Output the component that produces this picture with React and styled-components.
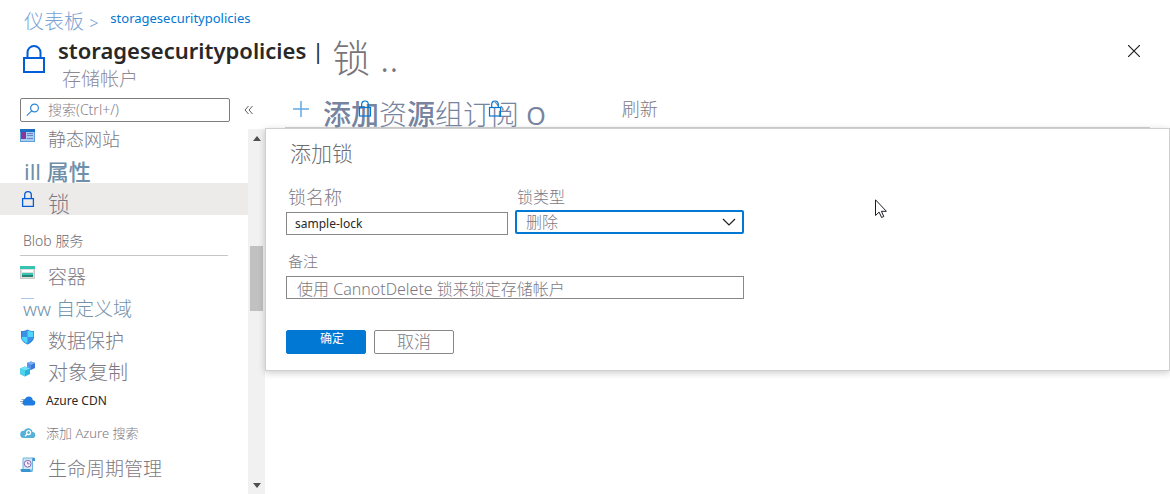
import React from "react";
import styled, { createGlobalStyle } from "styled-components";

const Global = createGlobalStyle`
  *, *::before, *::after { box-sizing: border-box; }
  body { margin: 0; background: #fff; color: #7c7983; }
  body, button, input, select {
    font-family: "Noto Sans", "Noto Sans CJK SC", sans-serif;
    font-weight: 300;
  }
`;

const Page = styled.div`
  min-height: 100vh;
  display: flex;
  flex-direction: column;
  overflow: hidden;
`;

/* ---------- header ---------- */
const Header = styled.header`
  height: 98px;
  display: flex;
  flex-direction: column;
`;
const Crumbs = styled.nav`
  display: flex;
  gap: 12px;
  height: 35px;
  padding: 8px 0 0 24px;
  white-space: nowrap;
`;
const CrumbLink = styled.a`
  color: ${(p) => (p.$strong ? "#0078d4" : "#7ba3d6")};
  font-size: ${(p) => (p.$strong ? 13 : 20)}px;
  font-weight: ${(p) => (p.$strong ? 400 : 300)};
  line-height: ${(p) => (p.$strong ? 20 : 28)}px;
  text-decoration: none;
`;
const CrumbMark = styled.span`
  font-size: 16px;
`;
const TitleBar = styled.div`
  display: flex;
  align-items: flex-start;
  padding: 0 28px 0 22px;
`;
const TitleIcon = styled.svg`
  width: 24px;
  height: 30px;
  margin-top: 9px;
  flex: none;
`;
const TitleText = styled.div`
  flex: 1;
  height: 62px;
  padding-left: 12px;
`;
const TitleLine = styled.h1`
  margin: 0;
  height: 31px;
  display: flex;
  gap: 8px;
  white-space: nowrap;
  color: #292827;
  font-size: 22px;
  font-weight: 600;
  line-height: 30px;
`;
const TitleDivider = styled.span`
  font-weight: 400;
`;
const TitleSuffix = styled.span`
  color: #77757a;
  font-size: 38px;
  font-weight: 300;
  line-height: 44px;
`;
const Subtitle = styled.p`
  margin: 0;
  padding-left: 4px;
  font-size: 19px;
  line-height: 26px;
  color: #8d8a95;
`;
const CloseButton = styled.button`
  width: 16px;
  height: 16px;
  margin-top: 8px;
  padding: 2px;
  border: 0;
  background: none;
  svg { display: block; width: 12px; height: 12px; }
`;

/* ---------- body ---------- */
const Body = styled.div`
  flex: 1;
  display: flex;
`;
const Sidebar = styled.aside`
  width: 265px;
  flex: none;
  display: flex;
  flex-direction: column;
`;
const SearchRow = styled.div`
  display: flex;
  align-items: center;
  gap: 14px;
  height: 24px;
  padding-left: 20px;
`;
const SearchBox = styled.label`
  width: 210px;
  height: 24px;
  display: flex;
  align-items: center;
  gap: 8px;
  padding: 0 5px;
  border: 1px solid #807e7c;
  border-radius: 2px;
  svg { width: 14px; height: 14px; flex: none; }
`;
const SearchInput = styled.input`
  flex: 1;
  min-width: 0;
  padding: 0;
  border: 0;
  outline: 0;
  background: none;
  font-size: 14px;
  line-height: 20px;
  &::placeholder { color: #85828c; opacity: 1; }
`;
const CollapseButton = styled.button`
  padding: 0;
  border: 0;
  background: none;
  width: 10px;
  height: 10px;
  svg { display: block; width: 10px; height: 10px; }
`;
const MenuArea = styled.div`
  flex: 1;
  display: flex;
`;
const Menu = styled.nav`
  flex: 1;
  margin-top: -3px;
`;
const MenuItem = styled.a`
  position: relative;
  height: 32px;
  display: flex;
  align-items: center;
  gap: ${(p) => p.$gap || 12}px;
  padding-left: ${(p) => p.$indent || 20}px;
  background: ${(p) => (p.$selected ? "#edebe9" : "transparent")};
  color: ${(p) => p.$color || "#7c7983"};
  font-size: ${(p) => p.$size || 19}px;
  font-weight: ${(p) => p.$weight || 300};
  line-height: 24px;
  text-decoration: none;
  white-space: nowrap;
  svg { width: 16px; height: 16px; flex: none; }
  b { font-weight: 500; }
`;
const ItemText = styled.span`
  padding-top: ${(p) => (p.$level ? 0 : 8)}px;
`;
const TopMark = styled.i`
  position: absolute;
  top: 9px;
  left: 21px;
  width: 13px;
  height: 1px;
  background: #a9c8e8;
`;
const MenuHeading = styled.h2`
  height: 41px;
  margin: 0 20px 1px;
  padding: 16px 0 0 3px;
  border-bottom: 1px solid #c8c6c4;
  font-size: 14px;
  font-weight: 300;
  line-height: 20px;
  color: #6c6a70;
`;
const ScrollTrack = styled.div`
  width: 17px;
  margin-top: 7px;
  display: flex;
  flex-direction: column;
  align-items: center;
  justify-content: space-between;
  padding: 7px 0 6px;
  background: #f1f1f1;
  svg { width: 8px; height: 5px; }
`;
const ScrollRail = styled.div`
  flex: 1;
  padding-top: 105px;
`;
const ScrollThumb = styled.div`
  width: 13px;
  height: 65px;
  background: #c1c1c1;
`;

/* ---------- main ---------- */
const Main = styled.main`
  flex: 1;
  min-width: 0;
`;
const Toolbar = styled.div`
  position: relative;
  z-index: 1;
  display: flex;
  height: 30px;
  margin: 0 20px;
  padding-left: 8px;
  border-bottom: 1px solid #c8c8c8;
`;
const ToolButton = styled.button`
  position: relative;
  display: flex;
  align-items: flex-start;
  gap: 14px;
  padding: 0;
  border: 0;
  background: none;
  color: #76849f;
  font-size: ${(p) => p.$size}px;
  line-height: ${(p) => p.$line}px;
  white-space: nowrap;
  b { font-weight: 500; }
`;
const PlainGlyph = styled.span`
  font-weight: 400;
  font-size: 25px;
`;
const PlusIcon = styled.svg`
  width: 16px;
  height: 16px;
  margin-top: 3px;
`;
const LockBadge = styled.svg`
  position: absolute;
  top: 2px;
  left: ${(p) => p.$left}px;
  width: 14px;
  height: 17px;
`;
const RefreshButton = styled(ToolButton)`
  margin-left: 76px;
  color: #7c7983;
`;
const Panel = styled.form`
  padding: 11px 20px 16px;
  border: 1px solid #cfcfcf;
  background: #fff;
  box-shadow: 0 2px 7px rgba(0, 0, 0, 0.2);
`;
const PanelTitle = styled.h2`
  margin: 0;
  padding-left: 4px;
  font-size: 21px;
  font-weight: 300;
  line-height: 27px;
  color: #6e6c70;
`;
const Fields = styled.div`
  display: grid;
  grid-template-columns: minmax(0, 222px) minmax(0, 229px);
  gap: 14px 7px;
  padding-top: 18px;
`;
const Field = styled.div`
  display: flex;
  flex-direction: column;
  grid-column: ${(p) => (p.$wide ? "1 / -1" : "auto")};
`;
const FieldLabel = styled.label`
  padding-left: 2px;
  height: ${(p) => p.$height}px;
  font-size: ${(p) => p.$size}px;
  line-height: 24px;
`;
const TextInput = styled.input`
  width: 100%;
  height: 23px;
  padding: 0 ${(p) => (p.$cjk ? 10 : 8)}px;
  border: 1px solid #8a8886;
  border-radius: 0;
  outline: 0;
  color: ${(p) => (p.$cjk ? "#7c7983" : "#292827")};
  font-size: ${(p) => (p.$cjk ? 16 : 12)}px;
  font-weight: ${(p) => (p.$cjk ? 300 : 400)};
`;
const SelectWrap = styled.div`
  position: relative;
  svg {
    position: absolute;
    right: 8px;
    top: 8px;
    width: 14px;
    height: 9px;
    pointer-events: none;
  }
`;
const Select = styled.select`
  display: block;
  width: 100%;
  height: 24px;
  padding: 0 9px;
  border: 2px solid #0078d4;
  border-radius: 2px;
  outline: 0;
  appearance: none;
  background: #fff;
  color: #7c7983;
  font-size: 16px;
  line-height: 18px;
`;
const Actions = styled.div`
  display: flex;
  gap: 8px;
  padding-top: 31px;
`;
const Button = styled.button`
  width: 80px;
  height: 24px;
  padding: ${(p) => (p.$primary ? "0 0 6px 12px" : "0")};
  border: 1px solid ${(p) => (p.$primary ? "#0078d4" : "#8a8886")};
  border-radius: 2px;
  background: ${(p) => (p.$primary ? "#0078d4" : "#fff")};
  color: ${(p) => (p.$primary ? "#fff" : "#7c7983")};
  font-size: ${(p) => (p.$primary ? 12 : 17)}px;
  font-weight: ${(p) => (p.$primary ? 400 : 300)};
  line-height: 16px;
`;
const Pointer = styled.svg`
  position: absolute;
  left: 875px;
  top: 199px;
  width: 12px;
  height: 20px;
  pointer-events: none;
`;

/* ---------- icons ---------- */
const SiteIcon = () => (
  <svg viewBox="0 0 16 16">
    <rect x="0" y="2" width="15" height="13" fill="#5ea0dc" />
    <rect x="0" y="2" width="15" height="3" fill="#1b6fc2" />
    <rect x="1" y="5" width="13" height="9" fill="#a9cdf0" />
    <rect x="1" y="5" width="5" height="7" fill="#86379b" />
    <path d="M7 6.500h6M7 8.500h6M7 11.500h6" stroke="#6f7fc4" />
  </svg>
);
const LockIcon = () => (
  <svg viewBox="0 0 16 16" fill="none" stroke="#015cda" strokeWidth="1.300">
    <rect x="2.600" y="7.600" width="10.800" height="7.800" />
    <path d="M4.700 7.500V4a3.300 3.300 0 0 1 6.600 0v3.500" />
  </svg>
);
const ContainerIcon = () => (
  <svg viewBox="0 0 16 16">
    <rect x="0" y="1" width="15" height="13" rx="1" fill="#c8c8c8" />
    <rect x="0" y="1" width="15" height="3" fill="#37c2b1" />
    <rect x="1" y="4" width="13" height="9" fill="#dedede" />
    <rect x="2" y="5" width="11" height="2" fill="#fff" />
    <rect x="2" y="8" width="11" height="2" fill="#37c2b1" />
    <rect x="2" y="10" width="11" height="2" fill="#258277" />
  </svg>
);
const ShieldIcon = () => (
  <svg viewBox="0 0 16 16">
    <path d="M7.500.5C9 1.800 11.500 2 14 2v6c0 3.500-3.500 6-6.500 7.500C4.500 14 1 11.500 1 8V2c2.500 0 5-.2 6.500-1.500z" fill="#1c7cd6" />
    <path d="M7.500 1.300V8H1.600V2.600C4 2.600 6 2.400 7.500 1.300z" fill="#3c91e4" />
    <path d="M7.500 8h5.900c0 3-3 5.300-5.900 6.800z" fill="#3c91e4" />
    <path d="M7.500 1.300V8h5.900V2.600c-2.400 0-4.400-.2-5.900-1.300z" fill="#50d8fc" />
    <path d="M7.500 8H1.600c0 3 3 5.300 5.900 6.800z" fill="#50d8fc" />
  </svg>
);
const ReplicaIcon = () => (
  <svg viewBox="0 0 16 16">
    <path d="M11 .5 15 2v5l-4 2-4-2V2z" fill="#3b78dc" />
    <path d="M11 .5 15 2l-4 2-4-2z" fill="#7fabf4" />
    <path d="m7 2 4 2v5L7 7z" fill="#5a93ee" />
    <path d="m5 5.500 5 2V13l-5 2.500L0 13V7.500z" fill="#27b4dc" />
    <path d="m5 5.500 5 2-5 2-5-2z" fill="#74e2f6" />
    <path d="m0 7.500 5 2v6L0 13z" fill="#4fd3ec" />
  </svg>
);
const CdnIcon = () => (
  <svg viewBox="0 0 16 16">
    <path d="M1.500 6.500h4M0 8.500h5M1.500 10.500h4" stroke="#9aa7b5" />
    <path d="M12.800 7.300A4.100 4.100 0 0 0 8.700 3.500 4.200 4.200 0 0 0 4.800 6.200 3.300 3.300 0 0 0 2.600 9.400 3.200 3.200 0 0 0 5.900 12.500h6.700a2.600 2.600 0 0 0 .2-5.200z" fill="#1f7ce0" />
  </svg>
);
const SearchCloudIcon = () => (
  <svg viewBox="0 0 16 16">
    <path d="M12.500 7A4.500 4.500 0 0 0 4 5.800 3.600 3.600 0 0 0 3.600 13h8.500A3 3 0 0 0 12.500 7z" fill="#55b1d8" />
    <circle cx="8.600" cy="7.600" r="2" fill="none" stroke="#fff" strokeWidth="1.200" />
    <path d="M7.200 9 5 11.200" stroke="#fff" strokeWidth="1.400" />
  </svg>
);
const LifecycleIcon = () => (
  <svg viewBox="0 0 16 16">
    <path d="M4 .5h9.500c1 0 1.500.6 1.500 1.500v2h-2v9c0 1-.6 2-1.500 2h-9C1.500 15 1 14.200 1 12.500h1.500V2c0-1 .6-1.500 1.500-1.500z" fill="#6fb4dc" />
    <path d="M3.500 1.500H12v11H3.500z" fill="#d3e8f6" />
    <path d="M12.500 4V2.300c0-.8.400-1.500 1-1.500S15 1.500 15 2.500V4zM.5 12h9.500c0 1.700.5 3 1.500 3h-9C1 15 .5 13.700.5 12z" fill="#3a94cd" />
    <circle cx="7.700" cy="6.700" r="3.400" fill="#f4f0fa" stroke="#8569b5" />
    <path d="M7.700 4.700v2.200h1.900" fill="none" stroke="#8569b5" />
  </svg>
);

const BLOB_ITEMS = [
  { text: "容器", icon: ContainerIcon },
  { text: "ww 自定义域", mark: true, indent: 23, color: "#7392ab" },
  { text: "数据保护", icon: ShieldIcon },
  { text: "对象复制", icon: ReplicaIcon, size: 20 },
  { text: "Azure CDN", icon: CdnIcon, size: 12, gap: 10, weight: 400, color: "#292827", level: true },
  { text: "添加 Azure 搜索", icon: SearchCloudIcon, size: 13, gap: 10, level: true },
  { text: "生命周期管理", icon: LifecycleIcon },
];

const SmallLock = ({ left }) => (
  <LockBadge $left={left} viewBox="0 0 14 17" fill="none" stroke="#0078d4" strokeWidth="1.200">
    <rect x="1.500" y="7.500" width="11" height="8.500" />
    <path d="M3.700 7.500V4.300a3.300 3.300 0 0 1 6.600 0v3.200" />
  </LockBadge>
);

export default function App() {
  return (
    <Page>
      <Global />
      <Header>
        <Crumbs>
          <CrumbLink href="#">仪表板 <CrumbMark>&gt;</CrumbMark></CrumbLink>
          <CrumbLink href="#" $strong>storagesecuritypolicies</CrumbLink>
        </Crumbs>
        <TitleBar>
          <TitleIcon viewBox="0 0 24 30" fill="none" stroke="#015cda" strokeWidth="2">
            <rect x="2" y="14" width="20" height="14" />
            <path d="M5.500 14V8.500a6.500 6.500 0 0 1 13 0V14" />
          </TitleIcon>
          <TitleText>
            <TitleLine>
              <span>storagesecuritypolicies <TitleDivider>|</TitleDivider></span>
              <TitleSuffix>锁 ..</TitleSuffix>
            </TitleLine>
            <Subtitle>存储帐户</Subtitle>
          </TitleText>
          <CloseButton aria-label="关闭">
            <svg viewBox="0 0 12 12" stroke="#201f1e" strokeWidth="1.200">
              <path d="m0 0 12 12M12 0 0 12" />
            </svg>
          </CloseButton>
        </TitleBar>
      </Header>

      <Body>
        <Sidebar>
          <SearchRow>
            <SearchBox>
              <svg viewBox="0 0 14 14" fill="none" stroke="#2d87dc" strokeWidth="1.200">
                <circle cx="8.500" cy="5" r="3.900" />
                <path d="M5.700 7.800.8 12.700" />
              </svg>
              <SearchInput aria-label="搜索" placeholder="搜索(Ctrl+/)" />
            </SearchBox>
            <CollapseButton aria-label="折叠">
              <svg viewBox="0 0 10 10" fill="none" stroke="#605e5c">
                <path d="M4.500 1 1 5l3.500 4M8.500 1 5 5l3.500 4" />
              </svg>
            </CollapseButton>
          </SearchRow>
          <MenuArea>
            <Menu>
              <MenuItem href="#" $size={18}>
                <SiteIcon />
                <ItemText>静态网站</ItemText>
              </MenuItem>
              <MenuItem href="#" $size={22} $indent={24} $weight={400} $color="#6f8fa9">
                <ItemText>ill <b>属性</b></ItemText>
              </MenuItem>
              <MenuItem href="#" $size={22} $selected>
                <LockIcon />
                <ItemText>锁</ItemText>
              </MenuItem>
              <MenuHeading>Blob 服务</MenuHeading>
              {BLOB_ITEMS.map(({ text, icon: Icon, mark, size, gap, indent, color, weight, level }) => (
                <MenuItem key={text} href="#" $size={size} $gap={gap} $indent={indent} $color={color} $weight={weight}>
                  {Icon && <Icon />}
                  {mark && <TopMark />}
                  <ItemText $level={level}>{text}</ItemText>
                </MenuItem>
              ))}
            </Menu>
            <ScrollTrack>
              <svg viewBox="0 0 8 5"><path d="M0 5 4 0l4 5z" fill="#505050" /></svg>
              <ScrollRail><ScrollThumb /></ScrollRail>
              <svg viewBox="0 0 8 5"><path d="m0 0 4 5 4-5z" fill="#505050" /></svg>
            </ScrollTrack>
          </MenuArea>
        </Sidebar>

        <Main>
          <Toolbar>
            <ToolButton $size={28} $line={32}>
              <PlusIcon viewBox="0 0 16 16" stroke="#62a9e6" strokeWidth="1.500">
                <path d="M8 0v16M0 8h16" />
              </PlusIcon>
              <span><b>添加</b>资<b>源</b>组订阅 <PlainGlyph>O</PlainGlyph></span>
              <SmallLock left={65} />
              <SmallLock left={195} />
            </ToolButton>
            <RefreshButton $size={18} $line={22}>刷新</RefreshButton>
          </Toolbar>
          <Panel onSubmit={(e) => e.preventDefault()}>
            <PanelTitle>添加锁</PanelTitle>
            <Fields>
              <Field>
                <FieldLabel htmlFor="lock-name" $size={18} $height={27}>锁名称</FieldLabel>
                <TextInput id="lock-name" defaultValue="sample-lock" />
              </Field>
              <Field>
                <FieldLabel htmlFor="lock-type" $size={16} $height={25}>锁类型</FieldLabel>
                <SelectWrap>
                  <Select id="lock-type" defaultValue="delete">
                    <option value="delete">删除</option>
                  </Select>
                  <svg viewBox="0 0 14 9" fill="none" stroke="#201f1e" strokeWidth="1.200">
                    <path d="m1 1 6 6 6-6" />
                  </svg>
                </SelectWrap>
              </Field>
              <Field $wide>
                <FieldLabel htmlFor="lock-notes" $size={15} $height={27}>备注</FieldLabel>
                <TextInput id="lock-notes" $cjk defaultValue="使用 CannotDelete 锁来锁定存储帐户" />
              </Field>
            </Fields>
            <Actions>
              <Button type="submit" $primary>确定</Button>
              <Button type="button">取消</Button>
            </Actions>
          </Panel>
        </Main>
      </Body>
      <Pointer viewBox="0 0 12 20">
        <path d="M.5.8v15.700l3.600-3.400 2.500 5.400 2.200-1-2.400-5.200h5z" fill="#fff" stroke="#1c1b28" />
      </Pointer>
    </Page>
  );
}
